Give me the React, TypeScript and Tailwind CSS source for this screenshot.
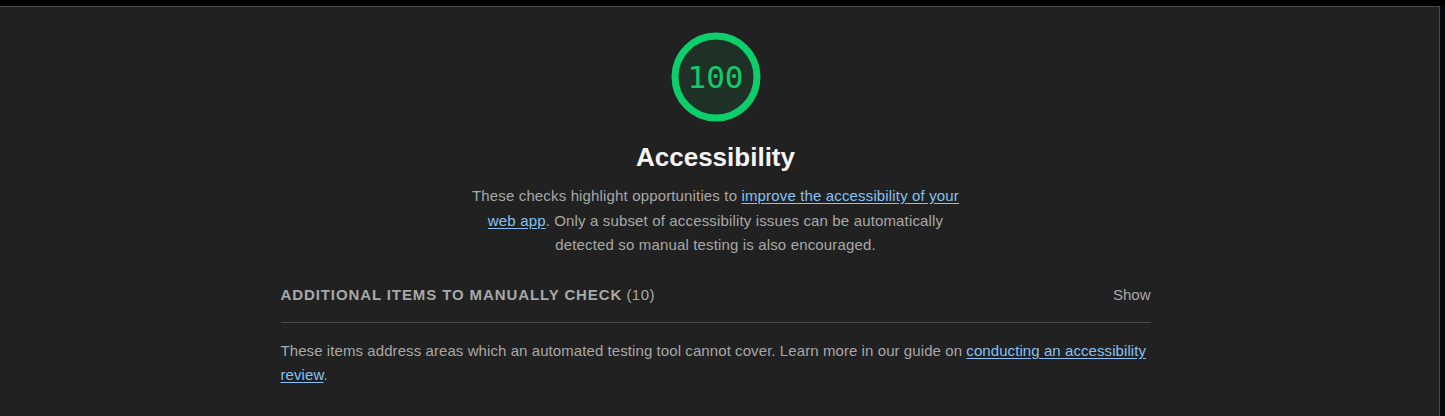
import React from 'react';

const sans = { fontFamily: '"Liberation Sans", Arial, sans-serif' };

function Gauge({ score }: { score: number }) {
  return (
    <div className="relative size-[90px]">
      <svg viewBox="0 0 90 90" className="absolute inset-0 size-full">
        <circle cx="45" cy="45" r="41" fill="#1f3027" stroke="#0cce6b" strokeWidth="7" />
      </svg>
      <div
        className="absolute inset-0 flex items-center justify-center text-[31px] text-[#0cce6b]"
        style={{ fontFamily: '"DejaVu Sans Mono", "Liberation Mono", monospace' }}
      >
        {score}
      </div>
    </div>
  );
}

export default function App() {
  return (
    <div className="flex h-[416px] w-[1445px] flex-col bg-black" style={sans}>
      <div className="h-[6px] shrink-0 bg-black" />
      <div className="flex min-h-0 flex-1">
        <div className="w-[1440px] shrink-0 border-t border-r border-[#4a4a4a] bg-[#212121] pr-2">
          <div className="flex flex-col items-center pt-[25px]">
            <Gauge score={100} />
            <h1 className="mt-[20px] text-[26px] leading-[30px] font-bold text-[#f5f5f5]">Accessibility</h1>
            <p className="mt-[12px] w-[498px] text-center text-[15px] leading-[24.5px] tracking-[0.15px] text-[#a8a8a8]">
              These checks highlight opportunities to{' '}
              <a className="text-[#85c1f5] underline underline-offset-2">
                improve the accessibility of your web app
              </a>
              . Only a subset of accessibility issues can be automatically detected so manual testing is also
              encouraged.
            </p>
          </div>

          <div className="mx-auto mt-[27px] w-[870px]">
            <div className="flex items-center justify-between border-b border-[#4a4a4a] pb-[17px]">
              <div className="text-[15px] leading-5 text-[#a8a8a8] uppercase">
                <span className="font-bold tracking-[0.06em]">Additional items to manually check</span>{' '}
                <span className="tracking-[0.03em]">(10)</span>
              </div>
              <span className="text-[15px] leading-5 text-[#a8a8a8]">Show</span>
            </div>
            <p className="mt-[16px] text-[15px] leading-6 tracking-[0.08px] text-[#a8a8a8]">
              These items address areas which an automated testing tool cannot cover. Learn more in our guide on{' '}
              <a className="text-[#85c1f5] underline underline-offset-2">conducting an accessibility review</a>.
            </p>
          </div>
        </div>
        <div className="flex-1 bg-[#05090d]" />
      </div>
    </div>
  );
}
